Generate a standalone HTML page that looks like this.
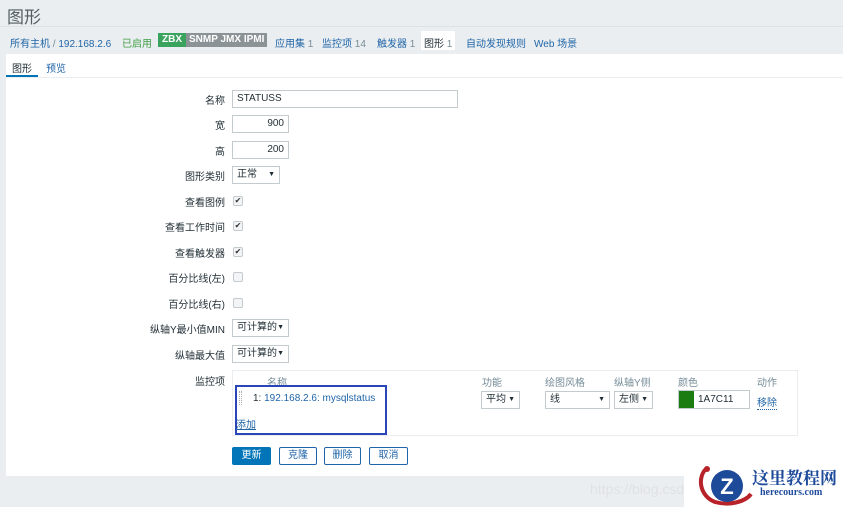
<!DOCTYPE html>
<html><head><meta charset="utf-8"><style>
*{margin:0;padding:0;box-sizing:border-box}
body{width:843px;height:507px;overflow:hidden;background:#ebeef0;font-family:"Liberation Sans","Noto Sans CJK SC",sans-serif;font-size:10px;color:#1f2c33;position:relative}
.a{position:absolute;white-space:nowrap}
.l{color:#1f65a8}
.g{color:#768d99}
.lab{position:absolute;right:618px;white-space:nowrap;font-size:10px;color:#1f2c33}
.in{position:absolute;border:1px solid #c4cbce;background:#fff;height:18px;line-height:16px;padding:0 4px;font-size:10px}
.cb{position:absolute;left:233px;width:10px;height:10px;border:1px solid #c4cbce;border-radius:2px;background:#f3f4f5;font-size:8px;line-height:8px;text-align:center;color:#333}
.btn{position:absolute;top:447px;height:18px;border:1px solid #1f65a8;color:#1f65a8;background:#fff;border-radius:2px;line-height:16px;text-align:center;font-size:10px}
.bd{display:inline-block;height:14px;line-height:14px;vertical-align:top}
</style></head><body>
<div class="a" style="left:7px;top:3px;font-size:17px;color:#535d63">图形</div>
<div class="a" style="left:0;top:26px;width:843px;height:1px;background:#dde2e5"></div>
<div class="a" style="left:10px;top:35px"><span class="l">所有主机</span> <span class="g">/</span> <span class="l">192.168.2.6</span></div>
<div class="a" style="left:122px;top:35px;color:#429e47">已启用</div>
<div class="a" style="left:158px;top:33px;height:14px;font-weight:bold;font-size:10px;color:#fff"><span class="bd" style="background:#3aa35e;padding:0 4px">ZBX</span><span class="bd" style="background:#8b9397;padding:0 3px">SNMP JMX IPMI</span></div>
<div class="a" style="left:275px;top:35px"><span class="l">应用集</span> <span class="g">1</span></div>
<div class="a" style="left:322px;top:35px"><span class="l">监控项</span> <span class="g">14</span></div>
<div class="a" style="left:377px;top:35px"><span class="l">触发器</span> <span class="g">1</span></div>
<div class="a" style="left:421px;top:31px;background:#fff;padding:4px 3px;height:19px">图形 <span class="g">1</span></div>
<div class="a l" style="left:466px;top:35px">自动发现规则</div>
<div class="a l" style="left:534px;top:35px">Web 场景</div>
<div class="a" style="left:6px;top:54px;width:837px;height:422px;background:#fff"></div>
<div class="a" style="left:12px;top:60px">图形</div>
<div class="a l" style="left:46px;top:60px">预览</div>
<div class="a" style="left:6px;top:75px;width:32px;height:2px;background:#0275b8"></div>
<div class="a" style="left:6px;top:77px;width:837px;height:1px;background:#ebeef0"></div>

<div class="lab" style="top:92px">名称</div><div class="in" style="left:232px;top:90px;width:226px">STATUSS</div>
<div class="lab" style="top:117px">宽</div><div class="in" style="left:232px;top:115px;width:57px;text-align:right">900</div>
<div class="lab" style="top:143px">高</div><div class="in" style="left:232px;top:141px;width:57px;text-align:right">200</div>
<div class="lab" style="top:168px">图形类别</div><div class="in" style="left:232px;top:166px;width:48px">正常 <span style="float:right;font-size:7px">▼</span></div>
<div class="lab" style="top:194px">查看图例</div><div class="cb" style="top:196px">✔</div>
<div class="lab" style="top:219px">查看工作时间</div><div class="cb" style="top:221px">✔</div>
<div class="lab" style="top:245px">查看触发器</div><div class="cb" style="top:247px">✔</div>
<div class="lab" style="top:270px">百分比线(左)</div><div class="cb" style="top:272px"></div>
<div class="lab" style="top:296px">百分比线(右)</div><div class="cb" style="top:298px"></div>
<div class="lab" style="top:321px">纵轴Y最小值MIN</div><div class="in" style="left:232px;top:319px;width:57px">可计算的 <span style="float:right;font-size:7px">▼</span></div>
<div class="lab" style="top:347px">纵轴最大值</div><div class="in" style="left:232px;top:345px;width:57px">可计算的 <span style="float:right;font-size:7px">▼</span></div>
<div class="lab" style="top:373px">监控项</div>

<div class="a" style="left:232px;top:370px;width:566px;height:66px;border:1px solid #ebeef0"></div>
<div class="a g" style="left:267px;top:374px">名称</div>
<div class="a g" style="left:482px;top:374px">功能</div>
<div class="a g" style="left:545px;top:374px">绘图风格</div>
<div class="a g" style="left:614px;top:374px">纵轴Y侧</div>
<div class="a g" style="left:678px;top:374px">颜色</div>
<div class="a g" style="left:757px;top:374px">动作</div>
<div class="a" style="left:235px;top:385px;width:152px;height:50px;border:2px solid #2a45b8"></div>
<div class="a" style="left:239px;top:391px;width:3px;height:14px;border-left:1px dotted #aaa;border-right:1px dotted #aaa"></div>
<div class="a" style="left:253px;top:393px">1: <span class="l">192.168.2.6: mysqlstatus</span></div>
<div class="a l" style="left:236px;top:416px;text-decoration:underline">添加</div>
<div class="in" style="left:481px;top:391px;width:39px">平均 <span style="float:right;font-size:7px">▼</span></div>
<div class="in" style="left:545px;top:391px;width:65px">线 <span style="float:right;font-size:7px">▼</span></div>
<div class="in" style="left:614px;top:391px;width:39px">左侧 <span style="float:right;font-size:7px">▼</span></div>
<div class="a" style="left:678px;top:390px;width:72px;height:19px;border:1px solid #c4cbce"></div>
<div class="a" style="left:679px;top:391px;width:15px;height:17px;background:#1a7c11"></div>
<div class="a" style="left:698px;top:394px">1A7C11</div>
<div class="a l" style="left:757px;top:394px;border-bottom:1px dotted #1f65a8">移除</div>

<div class="btn" style="left:232px;width:39px;background:#0275b8;color:#fff;border-color:#0275b8">更新</div>
<div class="btn" style="left:279px;width:38px">克隆</div>
<div class="btn" style="left:324px;width:37px">删除</div>
<div class="btn" style="left:369px;width:39px">取消</div>

<div class="a" style="left:590px;top:481px;color:#dfe2e4;font-size:14px">https://blog.csd</div>
<div class="a" style="left:684px;top:462px;width:159px;height:45px;background:#fff"></div>
<svg class="a" style="left:695px;top:462px" width="62" height="45" viewBox="0 0 62 45"><path d="M12 6 C2 14 4 34 20 40 C34 44 50 40 56 32" fill="none" stroke="#b8232a" stroke-width="4"/><circle cx="12" cy="7" r="3" fill="#b8232a"/><circle cx="32" cy="24" r="16" fill="#1e4a9a"/><text x="32" y="32" font-size="22" font-weight="bold" fill="#fff" text-anchor="middle" font-family="Liberation Sans">Z</text></svg>
<div class="a" style="left:752px;top:464px;font-size:17px;font-weight:bold;color:#1e4a9a;font-family:'Liberation Serif','Noto Serif CJK SC',serif">这里教程网</div>
<div class="a" style="left:760px;top:487px;font-size:10px;font-weight:bold;color:#1e4a9a;font-family:'Liberation Serif',serif">herecours.com</div>
</body></html>
